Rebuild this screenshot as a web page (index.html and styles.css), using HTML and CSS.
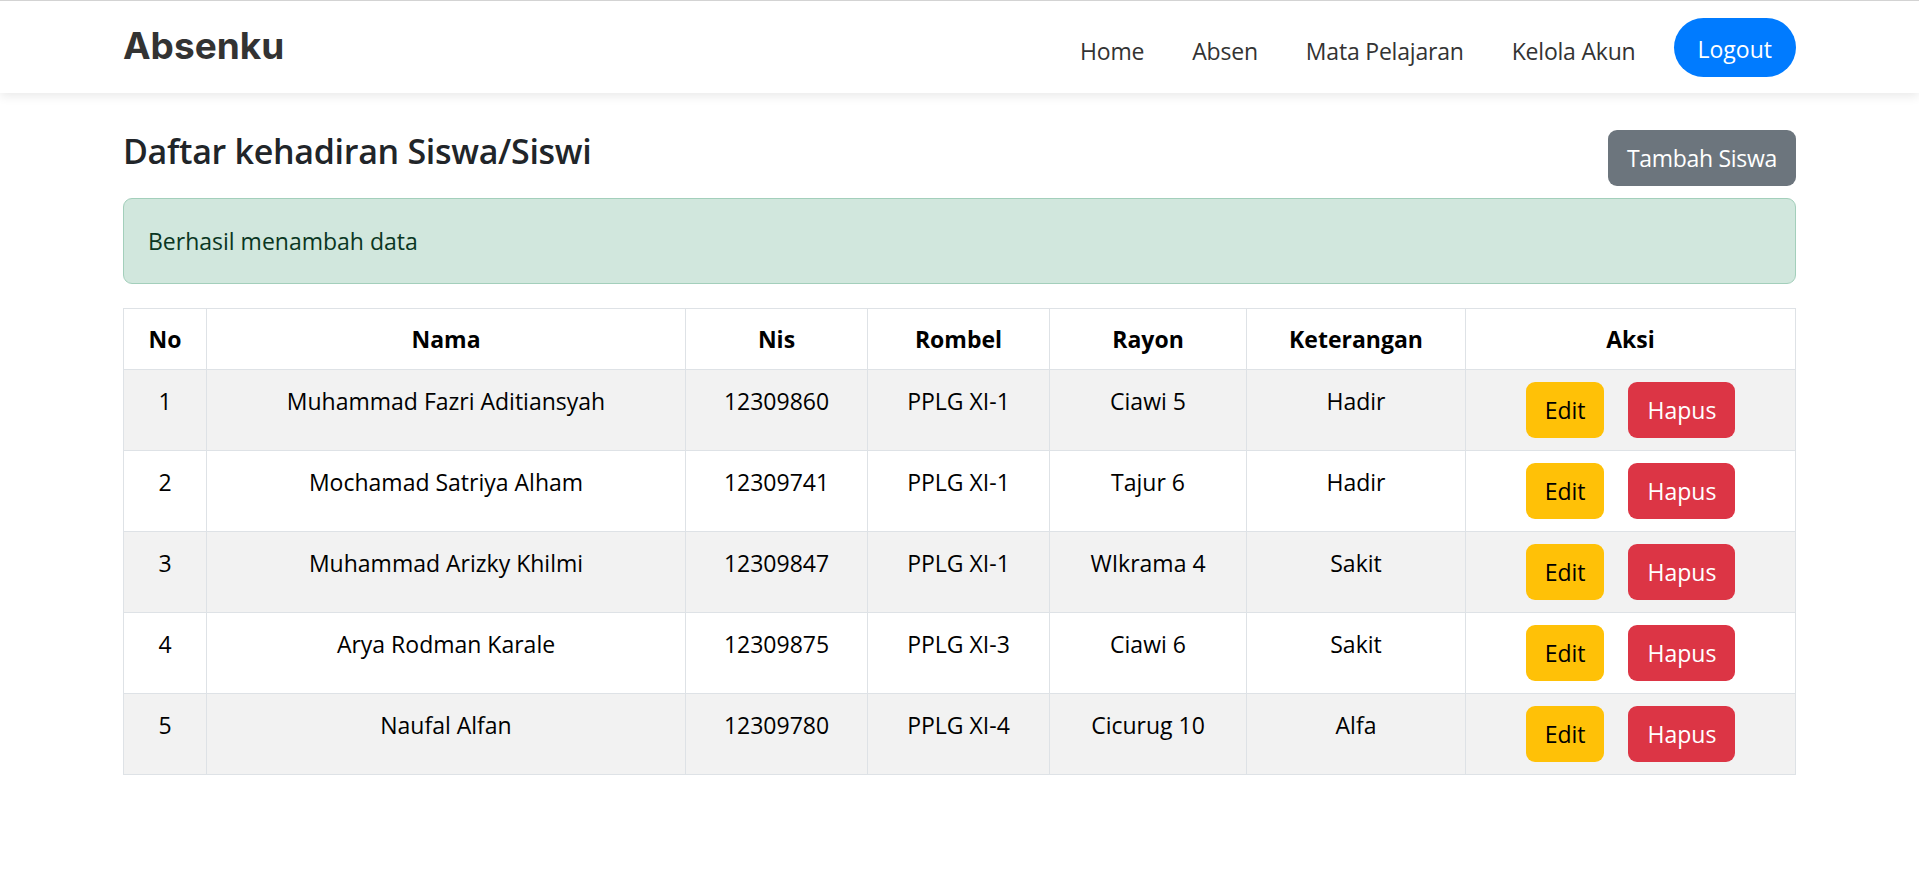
FILE: index.html
```html
<!DOCTYPE html>
<html lang="id">
<head>
<meta charset="utf-8">
<title>Absenku</title>
<link rel="stylesheet" href="styles.css">
</head>
<body>
<nav class="navbar">
  <div class="container nav-inner">
    <a class="brand" href="#">Absenku</a>
    <ul class="nav-links">
      <li><a class="nav-link" href="#">Home</a></li>
      <li><a class="nav-link" href="#">Absen</a></li>
      <li><a class="nav-link" href="#">Mata Pelajaran</a></li>
      <li><a class="nav-link" href="#">Kelola Akun</a></li>
      <li><a class="btn-logout" href="#">Logout</a></li>
    </ul>
  </div>
</nav>

<main class="container">
  <div class="page-head">
    <h3 class="title">Daftar kehadiran Siswa/Siswi</h3>
    <a class="btn btn-secondary" href="#">Tambah Siswa</a>
  </div>

  <div class="alert">Berhasil menambah data</div>

  <table class="table">
    <thead>
      <tr>
        <th class="c-no">No</th>
        <th class="c-nama">Nama</th>
        <th class="c-nis">Nis</th>
        <th class="c-rombel">Rombel</th>
        <th class="c-rayon">Rayon</th>
        <th class="c-ket">Keterangan</th>
        <th class="c-aksi">Aksi</th>
      </tr>
    </thead>
    <tbody>
      <tr>
        <td>1</td><td>Muhammad Fazri Aditiansyah</td><td>12309860</td><td>PPLG XI-1</td><td>Ciawi 5</td><td>Hadir</td>
        <td><div class="actions"><a class="btn btn-warning" href="#">Edit</a><a class="btn btn-danger" href="#">Hapus</a></div></td>
      </tr>
      <tr>
        <td>2</td><td>Mochamad Satriya Alham</td><td>12309741</td><td>PPLG XI-1</td><td>Tajur 6</td><td>Hadir</td>
        <td><div class="actions"><a class="btn btn-warning" href="#">Edit</a><a class="btn btn-danger" href="#">Hapus</a></div></td>
      </tr>
      <tr>
        <td>3</td><td>Muhammad Arizky Khilmi</td><td>12309847</td><td>PPLG XI-1</td><td>WIkrama 4</td><td>Sakit</td>
        <td><div class="actions"><a class="btn btn-warning" href="#">Edit</a><a class="btn btn-danger" href="#">Hapus</a></div></td>
      </tr>
      <tr>
        <td>4</td><td>Arya Rodman Karale</td><td>12309875</td><td>PPLG XI-3</td><td>Ciawi 6</td><td>Sakit</td>
        <td><div class="actions"><a class="btn btn-warning" href="#">Edit</a><a class="btn btn-danger" href="#">Hapus</a></div></td>
      </tr>
      <tr>
        <td>5</td><td>Naufal Alfan</td><td>12309780</td><td>PPLG XI-4</td><td>Cicurug 10</td><td>Alfa</td>
        <td><div class="actions"><a class="btn btn-warning" href="#">Edit</a><a class="btn btn-danger" href="#">Hapus</a></div></td>
      </tr>
    </tbody>
  </table>
</main>
</body>
</html>
```

FILE: styles.css
```css
* { box-sizing: border-box; }

html, body { margin: 0; padding: 0; }

body {
  font-family: "Open Sans", "Noto Sans", "Liberation Sans", sans-serif;
  font-size: 23px;
  line-height: 36px;
  color: #212529;
  background: #fff;
  border-top: 1px solid #d3d3d3;
}

a { text-decoration: none; }

.container {
  max-width: 1673px;
  margin: 0 auto;
}

/* Navbar */
.navbar {
  background: #fff;
  height: 92px;
  box-shadow: 0 3px 10px rgba(0, 0, 0, 0.09);
  position: relative;
}

.nav-inner {
  height: 100%;
  display: flex;
  align-items: center;
  justify-content: space-between;
}

.brand {
  font-family: "Inter", "Roboto", sans-serif;
  font-weight: 700;
  font-size: 37px;
  color: #333;
  letter-spacing: 0;
  margin-top: -2px;
}

.nav-links {
  list-style: none;
  margin: 0;
  padding: 0;
  display: flex;
  align-items: center;
}

.nav-link {
  display: block;
  padding: 10px 24px;
  color: #333;
  margin-top: 7px;
  letter-spacing: -0.2px;
}

.btn-logout {
  display: block;
  margin-left: 14px;
  background: #007bff;
  color: #fff;
  border-radius: 30px;
  padding: 13px 24px 10px;
  line-height: 36px;
}

/* Page header */
.page-head {
  display: flex;
  align-items: center;
  justify-content: space-between;
  margin-top: 36px;
}

.title {
  margin: 0 0 12px;
  font-size: 34px;
  font-weight: 600;
  line-height: 1.35;
  letter-spacing: -0.3px;
  color: #212529;
}

.btn {
  display: inline-block;
  padding: 9px 18px;
  border: 1.5px solid transparent;
  border-radius: 9px;
  line-height: 36px;
  font-size: 23px;
}

.btn-secondary { background: #6c757d; color: #fff; letter-spacing: -0.3px; }
.btn-warning { background: #ffc107; color: #000; }
.btn-danger { background: #dc3545; color: #fff; }

/* Alert */
.alert {
  margin-top: 11px;
  background: #d1e7dd;
  border: 1.5px solid #a3cfbb;
  border-radius: 9px;
  padding: 24px 24px;
  color: #0a3622;
}

/* Table */
.table {
  width: 100%;
  margin-top: 24px;
  border-collapse: collapse;
  table-layout: fixed;
  color: #000;
}

.table th, .table td {
  border: 1.5px solid #dee2e6;
  padding: 12px 12px;
  text-align: center;
  vertical-align: top;
}

.table th { font-weight: 700; }

.table td { padding-top: 13px; }

.table tbody tr:nth-child(odd) td { background: #f2f2f2; }

.c-no { width: 83px; }
.c-nama { width: 479px; }
.c-nis { width: 182px; }
.c-rombel { width: 182px; }
.c-rayon { width: 197px; }
.c-ket { width: 219px; }
.c-aksi { width: 330px; }

.actions {
  display: flex;
  justify-content: center;
  gap: 24px;
  margin-top: -1px;
}
```
